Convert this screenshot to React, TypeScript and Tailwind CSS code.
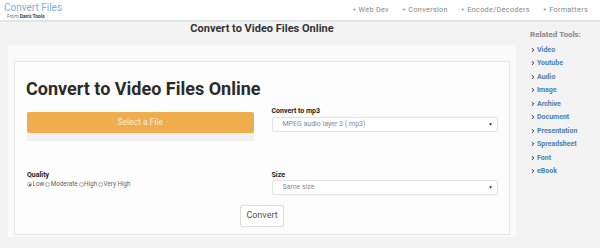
import React from 'react';
import { ChevronRight } from 'lucide-react';

const navItems = ['Web Dev', 'Conversion', 'Encode/Decoders', 'Formatters'];
const related = ['Video', 'Youtube', 'Audio', 'Image', 'Archive', 'Document', 'Presentation', 'Spreadsheet', 'Font', 'eBook'];
const qualities = ['Low', 'Moderate', 'High', 'Very High'];

function FakeSelect({ value }: { value: string }) {
  return (
    <div className="flex h-[15px] items-center justify-between rounded-[2px] border border-[#e2e2e2] bg-white pl-[10px] pr-[4px]">
      <span className="text-[7px] text-[#8a8a8a]">{value}</span>
      <span className="text-[5px] text-[#444]">▼</span>
    </div>
  );
}

export default function App() {
  return (
    <div className="h-[248px] w-[600px] overflow-hidden bg-[#f3f3f3] font-['Roboto',sans-serif]">
      {/* Header */}
      <header className="flex h-[22px] items-start justify-between border-b-2 border-[#dde7e8] bg-white pr-[12px]">
        <div className="pl-[4px] pt-[2px]">
          <div className="text-[10px] leading-[11px] text-[#7fb0d5]">Convert Files</div>
          <div className="pl-[3px] text-[5px] leading-[7px] text-[#777]">
            From <span className="font-bold text-[#444]">Dan's Tools</span>
          </div>
        </div>
        <nav className="flex gap-[13px] pt-[5px] text-[7.3px] tracking-[0.3px] text-[#888]">
          {navItems.map((n) => (
            <span key={n}>
              <span className="align-middle text-[4px]">▼</span> {n}
            </span>
          ))}
        </nav>
      </header>

      <div className="flex">
        {/* Main column */}
        <main className="ml-[8px] w-[508px]">
          <h2 className="pt-[1px] text-center text-[11px] font-bold leading-[12px] text-[#333]">Convert to Video Files Online</h2>
          <div className="mt-[10px] bg-[#fafafa] px-[6px] pb-[2px] pt-[16px]">
            <div className="border border-[#e6e6e6] bg-[#fdfdfd] px-[11px] pb-[7px] pt-[16px]">
              <h1 className="text-[18px] font-bold leading-[22px] text-[#2b2b2b]">Convert to Video Files Online</h1>

              <div className="mt-[7px] grid grid-cols-2 gap-[18px] pl-[1px]">
                <div className="pt-[5px]">
                  <div className="bg-[#f1f1f1] pb-[8px]">
                    <button className="flex h-[21px] w-full items-center justify-center rounded-[2px] bg-[#f0ad4e] text-[8.5px] text-[#fcecd4]">
                      Select a File
                    </button>
                  </div>
                </div>
                <div>
                  <div className="text-[7px] font-bold leading-[9px] text-[#222]">Convert to mp3</div>
                  <div className="mt-[1px]">
                    <FakeSelect value="MPEG audio layer 3 (.mp3)" />
                  </div>
                </div>
              </div>

              <div className="mt-[30px] grid grid-cols-2 gap-[18px] pl-[1px]">
                <div>
                  <div className="text-[7px] font-bold leading-[9px] text-[#222]">Quality</div>
                  <div className="flex items-center text-[6.3px] leading-[9px] text-[#666]">
                    {qualities.map((q, i) => (
                      <span key={q} className="mr-[1px] flex items-center">
                        <span className="mr-[0.5px] flex h-[5px] w-[5px] items-center justify-center rounded-full border border-[#aaa] bg-white">
                          {i === 0 && <span className="h-[2px] w-[2px] rounded-full bg-[#555]" />}
                        </span>
                        {q}
                      </span>
                    ))}
                  </div>
                </div>
                <div>
                  <div className="text-[7px] font-bold leading-[9px] text-[#222]">Size</div>
                  <FakeSelect value="Same size" />
                </div>
              </div>

              <div className="mt-[10px] flex justify-center">
                <button className="h-[22px] w-[44px] rounded-[2px] border border-[#ddd] bg-white text-[9px] text-[#555]">
                  Convert
                </button>
              </div>
            </div>
          </div>
        </main>

        {/* Sidebar */}
        <aside className="ml-[14px] pt-[8px]">
          <div className="text-[8px] font-bold leading-[10px] text-[#888]">Related Tools:</div>
          <ul className="mt-[3px]">
            {related.map((r) => (
              <li key={r} className="flex h-[13.5px] items-center text-[7px] font-bold text-[#4a80b4]">
                <ChevronRight size={6} strokeWidth={4} className="mr-[1px] text-[#222]" />
                {r}
              </li>
            ))}
          </ul>
        </aside>
      </div>
    </div>
  );
}
